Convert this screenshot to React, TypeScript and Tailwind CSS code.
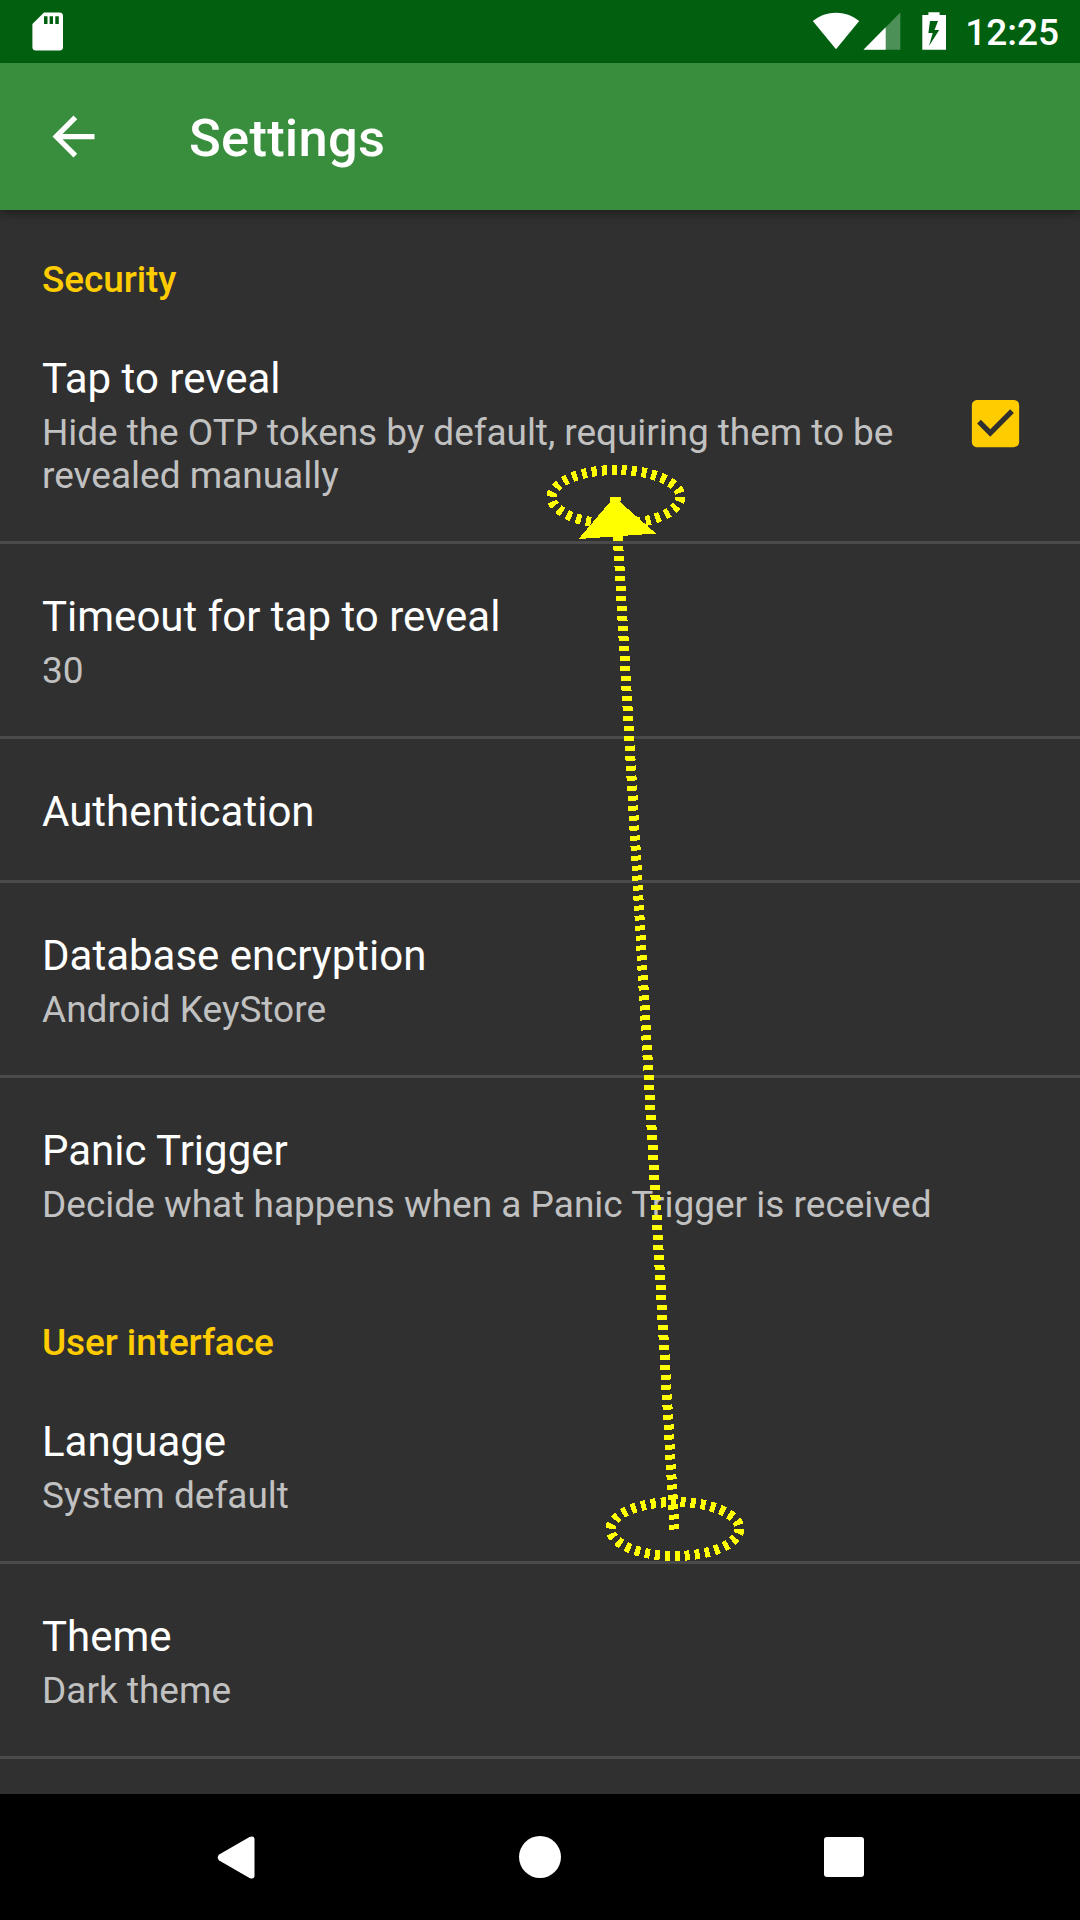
import React from "react";

type RowProps = {
  title: string;
  summary?: React.ReactNode;
  divider?: boolean;
  checked?: boolean;
};

function Row({ title, summary, divider = true, checked }: RowProps) {
  return (
    <div
      className={
        divider
          ? "flex items-center border-b-3 border-[#4a4a4a] pl-[42px]"
          : "flex items-center pl-[42px]"
      }
    >
      <div className="min-w-0 flex-1 pt-12 pb-11">
        <div className="text-[42px] leading-[49px] text-white">{title}</div>
        {summary && (
          <div className="mt-2 text-[37px] leading-[43px] text-[#c1c1c1]">{summary}</div>
        )}
      </div>
      {checked && (
        <svg className="mr-[53px] mb-px size-[63px] shrink-0" viewBox="0 0 24 24" fill="#ffcc00">
          <path d="M19 3H5c-1.11 0-2 .9-2 2v14c0 1.1.89 2 2 2h14c1.11 0 2-.9 2-2V5c0-1.1-.89-2-2-2zm-9 14l-5-5 1.41-1.41L10 14.17l7.59-7.59L19 8l-9 9z" />
        </svg>
      )}
    </div>
  );
}

function Header({ children }: { children: React.ReactNode }) {
  return (
    <div className="pb-[5px] pl-[42px] text-[37px] leading-[43px] font-medium tracking-[-0.1px] text-[#ffcc00]">
      {children}
    </div>
  );
}

function StatusBar() {
  return (
    <div className="flex h-[63px] shrink-0 items-center justify-between bg-[#00600f] pr-[21px] pl-[32px]">
      <svg className="h-[63px] w-[32px]" viewBox="0 0 32 63">
        <path
          fillRule="evenodd"
          fill="#fff"
          d="M12 12.5H27.5Q31 12.5 31 16V47Q31 50.6 27.5 50.6H4Q.4 50.6 .4 47V24ZM12 16.3V24H15.5V16.3ZM17.6 16.3V24H21V16.3ZM23.3 16.3V24H26.8V16.3Z"
        />
      </svg>
      <div className="flex items-center">
        <svg className="mr-[18px] h-[63px] w-[136px]" viewBox="811 0 136 63" fill="#fff">
          <path d="M812.8 21C826 9.9 846 9.9 859.2 21L836 49.3Z" />
          <path d="M900.3 12.5V49.7H863.5Z" opacity=".3" />
          <path d="M885.7 27.3V49.7H863.5Z" />
          <path
            fillRule="evenodd"
            d="M928.4 12.3H939.6V15H946V49.8H922.3V15H928.4ZM930 21L928.4 33H932.7L929 46L939.2 30H934.5L938 21Z"
          />
        </svg>
        <div className="pt-0.5 text-[37px] leading-[43px] font-medium text-white">12:25</div>
      </div>
    </div>
  );
}

function SwipeAnnotation() {
  return (
    <svg
      className="pointer-events-none absolute top-0 left-0 h-[1920px] w-[1080px]"
      viewBox="0 0 1080 1920"
      fill="none"
      stroke="#ffff00"
      strokeWidth="10"
      shapeRendering="crispEdges"
    >
      <ellipse cx="616" cy="497" rx="64.5" ry="27" strokeDasharray="5 5" />
      <ellipse cx="675" cy="1529" rx="64.5" ry="27" strokeDasharray="5 5" />
      <path d="M674.5 1529.5L615.5 497" strokeDasharray="5 5" />
      <path d="M610 497H620V502L656 533.5L578.5 539L610 502Z" fill="#ffff00" stroke="none" />
    </svg>
  );
}

export default function App() {
  return (
    <div className="relative flex h-[1920px] w-[1080px] flex-col overflow-hidden bg-[#303030] font-[Roboto,sans-serif]">
      <StatusBar />
      <div className="z-10 flex h-[147px] shrink-0 items-center bg-[#388e3c] pl-[42px] shadow-[0_4px_9px_rgba(0,0,0,0.35)]">
        <svg className="size-[63px]" viewBox="0 0 24 24" fill="#fff">
          <path d="M20 11H7.83l5.59-5.59L12 4l-8 8 8 8 1.41-1.41L7.83 13H20v-2z" />
        </svg>
        <div className="ml-[84px] pt-0.5 text-[52.5px] leading-[62px] font-medium tracking-[0.25px] text-white">
          Settings
        </div>
      </div>
      <div className="min-h-0 flex-1 overflow-hidden pt-12">
        <Header>Security</Header>
        <Row
          title="Tap to reveal"
          summary={
            <>
              <span className="tracking-[-0.06px]">
                Hide the OTP tokens by default, requiring them to be
              </span>
              <br />
              revealed manually
            </>
          }
          checked
        />
        <Row title="Timeout for tap to reveal" summary="30" />
        <Row title="Authentication" />
        <Row title="Database encryption" summary="Android KeyStore" />
        <Row
          title="Panic Trigger"
          summary="Decide what happens when a Panic Trigger is received"
          divider={false}
        />
        <div className="h-[51px]" />
        <Header>User interface</Header>
        <Row title="Language" summary="System default" />
        <Row title="Theme" summary="Dark theme" />
      </div>
      <div className="flex h-[126px] shrink-0 items-center bg-black pl-[217px]">
        <svg className="h-[43px] w-[38px]" viewBox="0 0 38 43" fill="#fff">
          <path d="M2.2 18.6L32.5 1Q37.5-.8 37.5 3.5V39.5Q37.5 43.8 32.5 42L2.2 24.4Q-.8 21.5 2.2 18.6Z" />
        </svg>
        <div className="ml-[264px] size-[42px] rounded-full bg-white" />
        <div className="ml-[263px] size-10 rounded-[3px] bg-white" />
      </div>
      <SwipeAnnotation />
    </div>
  );
}
